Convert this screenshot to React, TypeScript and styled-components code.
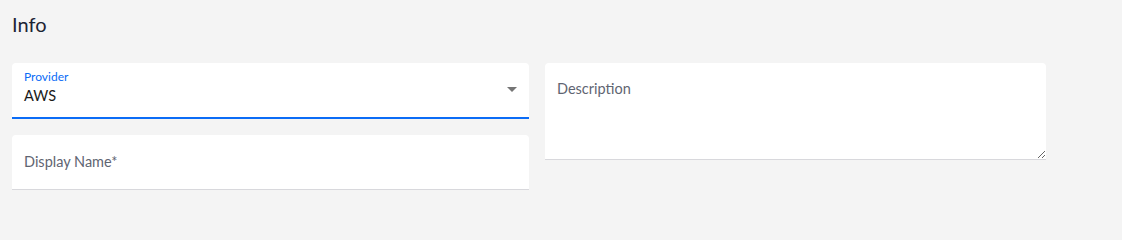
import React from "react";
import styled, { createGlobalStyle } from "styled-components";

const GlobalStyle = createGlobalStyle`
  html, body {
    margin: 0;
    padding: 0;
    height: 215px;
    overflow: hidden;
    background: #f4f4f4;
  }
  body {
    font-family: Lato, "Open Sans", sans-serif;
  }
`;

const Page = styled.div`
  height: 215px;
  box-sizing: border-box;
  padding: 12px;
  background: #f4f4f4;
`;

const Title = styled.h2`
  margin: 0;
  font-size: 20px;
  line-height: 24px;
  font-weight: 400;
  color: #1c2434;
`;

const Grid = styled.div`
  display: grid;
  grid-template-columns: 517px 501px;
  column-gap: 16px;
  align-items: start;
  margin-top: 27px;
`;

const Column = styled.div`
  display: flex;
  flex-direction: column;
  gap: 16px;
`;

const Field = styled.div<{ focused?: boolean }>`
  position: relative;
  box-sizing: border-box;
  height: ${({ focused }) => (focused ? "56px" : "55px")};
  background: #ffffff;
  border-radius: 4px 4px 0 0;
  border-bottom: ${({ focused }) =>
    focused ? "2px solid #0b6cf6" : "1px solid #d8d8dc"};
  display: flex;
  flex-direction: column;
  justify-content: center;
  padding: 0 12px;
`;

const FloatingLabel = styled.label`
  font-size: 12px;
  line-height: 16px;
  color: #0b6cf6;
  margin-top: -5px;
`;

const Value = styled.div`
  font-size: 14.5px;
  line-height: 20px;
  color: #1a1a1a;
  margin-top: 1px;
`;

const Arrow = styled.span`
  position: absolute;
  right: 12px;
  top: 24px;
  width: 0;
  height: 0;
  border-left: 5px solid transparent;
  border-right: 5px solid transparent;
  border-top: 5px solid #757575;
`;

const TextInput = styled.input`
  border: none;
  outline: none;
  background: transparent;
  padding: 0;
  margin: 0;
  font-family: inherit;
  font-size: 14.5px;
  line-height: 20px;
  color: #1a1a1a;
  &::placeholder {
    color: #5f6572;
  }
`;

const TextArea = styled.textarea`
  display: block;
  box-sizing: border-box;
  width: 501px;
  height: 97px;
  margin: 0;
  padding: 16px 12px 8px;
  border: none;
  border-bottom: 1px solid #d8d8dc;
  border-radius: 4px 4px 0 0;
  outline: none;
  background: #ffffff;
  resize: vertical;
  font-family: inherit;
  font-size: 14.5px;
  line-height: 20px;
  color: #1a1a1a;
  &::placeholder {
    color: #5f6572;
  }
`;

export default function App() {
  return (
    <>
      <GlobalStyle />
      <Page>
        <Title>Info</Title>
        <Grid>
          <Column>
            <Field focused>
              <FloatingLabel>Provider</FloatingLabel>
              <Value>AWS</Value>
              <Arrow />
            </Field>
            <Field>
              <TextInput placeholder="Display Name*" />
            </Field>
          </Column>
          <TextArea placeholder="Description" />
        </Grid>
      </Page>
    </>
  );
}
